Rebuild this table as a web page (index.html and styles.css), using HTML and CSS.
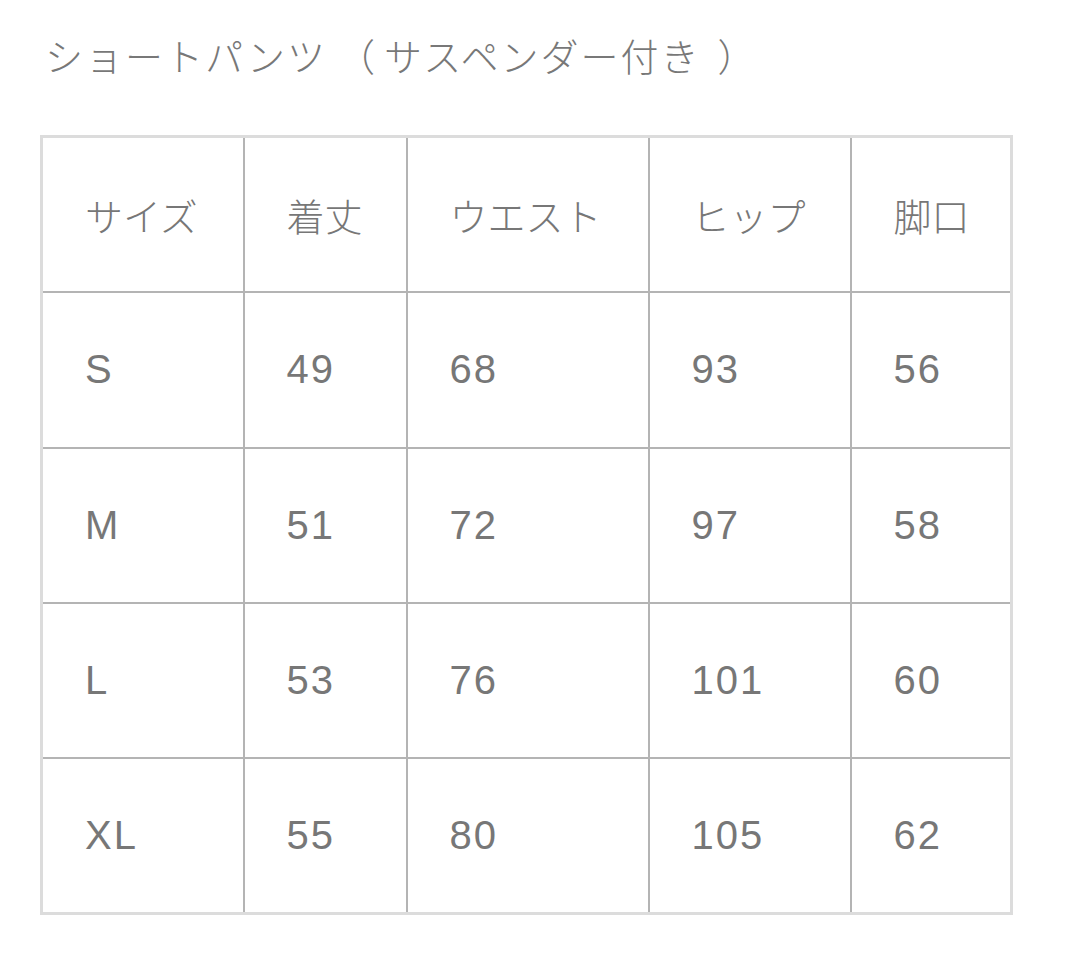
FILE: index.html
```html
<!DOCTYPE html>
<html lang="ja">
<head>
<meta charset="utf-8">
<link rel="stylesheet" href="styles.css">
</head>
<body>
<div class="page">
  <h1 class="title">ショートパンツ<span class="paren-open">（</span>サスペンダー付き<span class="paren-close">）</span></h1>
  <table class="size-table">
    <colgroup>
      <col class="c1"><col class="c2"><col class="c3"><col class="c4"><col class="c5">
    </colgroup>
    <tr class="head"><td>サイズ</td><td>着丈</td><td>ウエスト</td><td>ヒップ</td><td>脚口</td></tr>
    <tr><td>S</td><td>49</td><td>68</td><td>93</td><td>56</td></tr>
    <tr><td>M</td><td>51</td><td>72</td><td>97</td><td>58</td></tr>
    <tr><td>L</td><td>53</td><td>76</td><td>101</td><td>60</td></tr>
    <tr><td>XL</td><td>55</td><td>80</td><td>105</td><td>62</td></tr>
  </table>
</div>
</body>
</html>
```
FILE: styles.css
```css
html, body {
  margin: 0;
  padding: 0;
  background: #ffffff;
}
.page {
  padding: 35px 0 0 40px;
  font-family: "Liberation Sans", "Noto Sans CJK JP", sans-serif;
  color: #777777;
}
.title {
  margin: 0 0 0 5px;
  font-size: 38px;
  font-weight: 300;
  line-height: 46px;
  letter-spacing: 2px;
  color: #787878;
}
.paren-open { margin-left: 10px; margin-right: 7px; }
.paren-close { margin-left: 17px; }
.size-table {
  margin-top: 54px;
  border-collapse: collapse;
  border: 3px solid #dcdcdc;
  table-layout: fixed;
}
.c1 { width: 202px; }
.c2 { width: 163px; }
.c3 { width: 242px; }
.c4 { width: 202px; }
.c5 { width: 161px; }
.size-table td {
  border: 2px solid #b4b4b4;
  height: 153.3px;
  padding: 0 0 0 42px;
  font-size: 40px;
  font-weight: 300;
  letter-spacing: 2px;
  color: #777777;
  vertical-align: middle;
}
.size-table .head td {
  font-size: 38px;
  letter-spacing: 0;
}
.size-table tr:first-child td { border-top: 3px solid #dcdcdc; }
.size-table tr:last-child td { border-bottom: 3px solid #dcdcdc; }
.size-table td:first-child { border-left: 3px solid #dcdcdc; }
.size-table td:last-child { border-right: 3px solid #dcdcdc; }
```
